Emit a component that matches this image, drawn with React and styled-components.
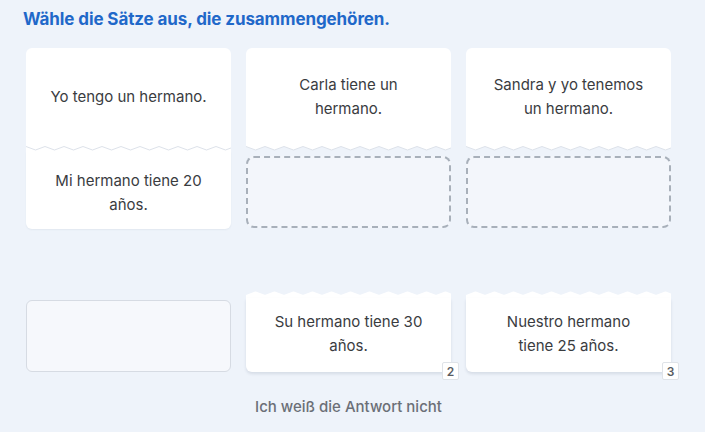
import React from 'react'
import styled, { createGlobalStyle } from 'styled-components'

// global page styles
const GlobalStyle = createGlobalStyle`
    html, body {
        margin: 0;
        background: #eef3fa;
        font-family: Inter, "Noto Sans", sans-serif;
    }
`

// styled components
const Page = styled.div`
    width: 705px;
    height: 432px;
    box-sizing: border-box;
    padding: 9px 0 0 23px;
    display: flex;
    flex-direction: column;
`

const Title = styled.h1`
    margin: 0 0 18px;
    font-size: 17px;
    line-height: 21px;
    font-weight: 700;
    color: #1f68c9;
    letter-spacing: -0.1px;
`

const Grid = styled.div`
    margin-left: 3px;
    display: grid;
    grid-template-columns: repeat(3, 205px);
    column-gap: 15px;
`

const Column = styled.div`
    display: flex;
    flex-direction: column;
`

const Prompt = styled.div`
    height: 97px;
    background: #fff;
    border-radius: 6px 6px 0 0;
    display: flex;
    align-items: center;
    justify-content: center;
    text-align: center;
    padding: 0 20px;
    box-sizing: border-box;
`

const Text = styled.p`
    margin: 0;
    font-size: 15px;
    line-height: 24px;
    color: #3a3c3f;
`

const Edge = styled.svg`
    display: block;
    width: 205px;
    height: 7px;
    background: ${p => (p.$joined ? '#fff' : 'transparent')};
`

const Answer = styled.div`
    position: relative;
    height: ${p => (p.$joined ? '77px' : '74px')};
    background: #fff;
    border-radius: 0 0 6px 6px;
    box-shadow: ${p => (p.$joined ? '0 1px 2px rgba(40, 60, 90, 0.06)' : '0 2px 3px rgba(40, 60, 90, 0.12)')};
    display: flex;
    align-items: center;
    justify-content: center;
    text-align: center;
    padding: ${p => (p.$joined ? '4px 24px 0' : '0 24px 2px')};
    box-sizing: border-box;
`

const Slot = styled.div`
    margin-top: 4px;
    height: 72px;
    border: 2px dashed #a8b0ba;
    border-radius: 8px;
    background: #f3f6fb;
    box-sizing: border-box;
`

const Tray = styled.div`
    margin-top: 62px;
    margin-left: 3px;
    display: grid;
    grid-template-columns: repeat(3, 205px);
    column-gap: 15px;
    align-items: end;
`

const Empty = styled.div`
    height: 72px;
    border: 1px solid #d6dbe3;
    border-radius: 6px;
    background: #f6f8fc;
    box-sizing: border-box;
`

const Badge = styled.span`
    position: absolute;
    right: -8px;
    bottom: -8px;
    width: 17px;
    height: 18px;
    background: #fff;
    border: 1px solid #dfe3e8;
    border-radius: 2px;
    font-size: 12px;
    font-weight: 600;
    color: #5a5d62;
    display: flex;
    align-items: center;
    justify-content: center;
    box-sizing: border-box;
`

const Footer = styled.div`
    margin: 25px 0 0 -23px;
    width: 697px;
    text-align: center;
    font-size: 15px;
    font-weight: 500;
    color: #6b6f77;
`

// wavy tear line
const W = 205
const H = 7
const STEP = 9.5

const zigzag = (down) => {
    const pts = []
    for (let i = 0; i * STEP <= W + STEP; i++) {
        const up = i % 2 === 0
        pts.push(`${(i * STEP).toFixed(1)},${up === down ? 1.5 : H - 2}`)
    }
    return pts
}

const TornBottom = ({ joined }) => {
    const pts = zigzag(true)
    return (
        <Edge $joined={joined} viewBox={`0 0 ${W} ${H}`} preserveAspectRatio="none">
            <path d={`M0,0 L${pts.join(' L')} L${W},0 Z`} fill="#fff" />
            <polyline points={pts.join(' ')} fill="none" stroke="#dde2ea" strokeWidth="1" strokeLinejoin="round" />
        </Edge>
    )
}

const TornTop = () => {
    const pts = zigzag(false)
    return (
        <Edge viewBox={`0 0 ${W} ${H}`} preserveAspectRatio="none">
            <path d={`M0,${H} L${pts.join(' L')} L${W},${H} Z`} fill="#fff" stroke="#fff" strokeLinejoin="round" strokeWidth="2" />
        </Edge>
    )
}

const prompts = [
    { text: 'Yo tengo un hermano.', match: 'Mi hermano tiene 20 años.' },
    { text: 'Carla tiene un hermano.' },
    { text: 'Sandra y yo tenemos un hermano.' },
]

const options = [
    null,
    { text: 'Su hermano tiene 30 años.', key: 2 },
    { text: 'Nuestro hermano tiene 25 años.', key: 3 },
]

const App = () => {
    return (
        <Page>
            <GlobalStyle />
            <Title>Wähle die Sätze aus, die zusammengehören.</Title>
            <Grid>
                {prompts.map((p) => (
                    <Column key={p.text}>
                        <Prompt><Text>{p.text}</Text></Prompt>
                        <TornBottom joined={!!p.match} />
                        {p.match
                            ? <Answer $joined><Text>{p.match}</Text></Answer>
                            : <Slot />}
                    </Column>
                ))}
            </Grid>
            <Tray>
                {options.map((o, i) => o
                    ? (
                        <Column key={i}>
                            <TornTop />
                            <Answer>
                                <Text>{o.text}</Text>
                                <Badge>{o.key}</Badge>
                            </Answer>
                        </Column>
                    )
                    : <Empty key={i} />)}
            </Tray>
            <Footer>Ich weiß die Antwort nicht</Footer>
        </Page>
    )
}

export default App
